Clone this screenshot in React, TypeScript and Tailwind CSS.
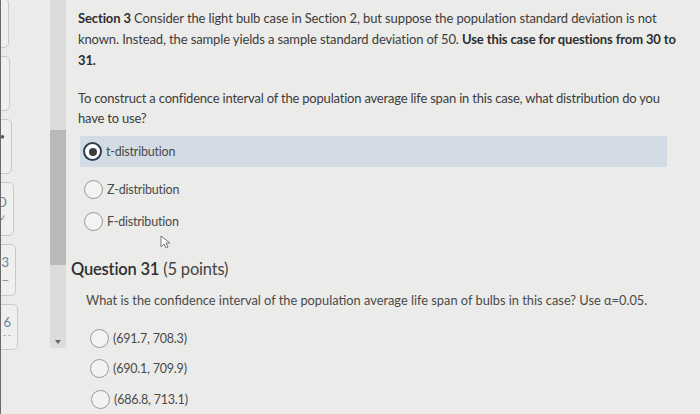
import React from "react";

const Radio = ({ checked = false }: { checked?: boolean }) =>
  checked ? (
    <span className="w-[19px] h-[19px] rounded-full border-[2.5px] border-[#2c3e55] bg-white flex items-center justify-center shrink-0">
      <span className="w-[8px] h-[8px] rounded-full bg-[#3d3d3d]" />
    </span>
  ) : (
    <span className="w-[19px] h-[19px] rounded-full border border-[#9a9a9a] bg-[#f3f3f2] shrink-0" />
  );

const Option = ({
  label,
  checked,
  className = "",
  labelClass = "",
}: {
  label: string;
  checked?: boolean;
  className?: string;
  labelClass?: string;
}) => (
  <div className={`flex items-center h-[19px] gap-[4px] ${className}`}>
    <Radio checked={checked} />
    <span className={`text-[12.5px] leading-[19px] text-[#4a4a4a] tracking-[-0.2px] ${labelClass}`}>
      {label}
    </span>
  </div>
);

const Tile = ({ w, h, children }: { w: string; h: string; children?: React.ReactNode }) => (
  <div
    className={`${w} ${h} -ml-[30px] shrink-0 rounded-[5px] border border-[#c9c9c9] bg-[#efefed] flex flex-col items-end justify-center pr-[6px] text-[13px] text-[#6b7fa8] leading-none`}
  >
    {children}
  </div>
);

export default function App() {
  return (
    <div
      className="w-[700px] h-[414px] overflow-hidden flex bg-[#ebebe9] text-[#3a3a3a]"
      style={{ fontFamily: "Lato, 'Open Sans', sans-serif" }}
    >
      {/* left question tiles */}
      <div className="w-[50px] shrink-0 border-l border-[#6a6a6a] flex flex-col gap-[8px] -mt-[2px] overflow-hidden">
        <Tile w="w-[38px]" h="h-[50px]" />
        <Tile w="w-[39px]" h="h-[55px]" />
        <Tile w="w-[41px]" h="h-[55px]">
          <span className="text-[9px] text-[#555] -mt-[20px]">•</span>
        </Tile>
        <Tile w="w-[43px]" h="h-[54px]">
          <span>D</span>
          <span className="text-[9px] text-[#777] mt-[4px]">✓</span>
        </Tile>
        <Tile w="w-[45px]" h="h-[52px]">
          <span>3</span>
          <span className="text-[9px] text-[#777] mt-[6px]">—</span>
        </Tile>
        <Tile w="w-[47px]" h="h-[46px]">
          <span>6</span>
          <span className="text-[8px] text-[#777] mt-[2px]">- -</span>
        </Tile>
      </div>

      {/* scrollbar */}
      <div className="w-[16px] shrink-0 h-[348px] bg-[#dcdcda] flex flex-col">
        <div className="h-[130px]" />
        <div className="h-[135px] bg-[#b9b9b7]" />
        <div className="flex-1 flex items-end justify-center pb-[4px]">
          <svg width="6" height="4" viewBox="0 0 6 4">
            <path d="M0 0h6L3 4z" fill="#666" />
          </svg>
        </div>
      </div>

      {/* content */}
      <div className="flex-1 flex flex-col pt-[8px]">
        <p className="ml-[12px] text-[13px] leading-[21px] tracking-[-0.12px] text-[#3c3c3c] whitespace-nowrap">
          <b className="text-[#2e2e2e]">Section 3</b> Consider the light bulb case in Section 2, but suppose
          the population standard deviation is not
          <br />
          known. Instead, the sample yields a sample standard deviation of 50.{" "}
          <b className="text-[#2e2e2e]">Use this case for questions from 30 to</b>
          <br />
          <b className="text-[#2e2e2e]">31.</b>
        </p>

        <p className="ml-[12px] mt-[17px] text-[13px] leading-[20px] tracking-[-0.2px] text-[#3c3c3c] whitespace-nowrap">
          To construct a confidence interval of the population average life span in this case, what
          distribution do you
          <br />
          have to use?
        </p>

        <div className="ml-[14px] mt-[8px] w-[587px] h-[31px] bg-[#d3dce5] flex items-center pl-[3px]">
          <Option label="t-distribution" checked />
        </div>
        <Option label="Z-distribution" className="ml-[18px] mt-[13px]" />
        <Option label="F-distribution" className="ml-[18px] mt-[13px]" />

        <div className="ml-[94px] mt-[4px] h-[14px]">
          <svg width="11" height="14" viewBox="0 0 11 14">
            <path d="M1 1v11l3-3 2 4 2-1-2-4h4z" fill="#fff" stroke="#777" strokeWidth="1" />
          </svg>
        </div>

        <div className="ml-[5px] mt-[10px] text-[16.5px] leading-[20px] text-[#2f2f2f] tracking-[-0.2px] whitespace-nowrap">
          <span className="font-semibold">Question 31</span>{" "}
          <span className="text-[#444]">(5 points)</span>
        </div>

        <p className="ml-[20px] mt-[13px] text-[12.8px] leading-[16px] text-[#4a4a4a] whitespace-nowrap">
          What is the confidence interval of the population average life span of bulbs in this case? Use
          α=0.05.
        </p>

        <Option label="(691.7, 708.3)" className="ml-[24px] mt-[21px]" labelClass="tracking-[-0.2px]" />
        <Option label="(690.1, 709.9)" className="ml-[24px] mt-[11px]" labelClass="tracking-[-0.2px]" />
        <Option label="(686.8, 713.1)" className="ml-[25px] mt-[12px]" labelClass="tracking-[-0.2px]" />
      </div>
    </div>
  );
}
